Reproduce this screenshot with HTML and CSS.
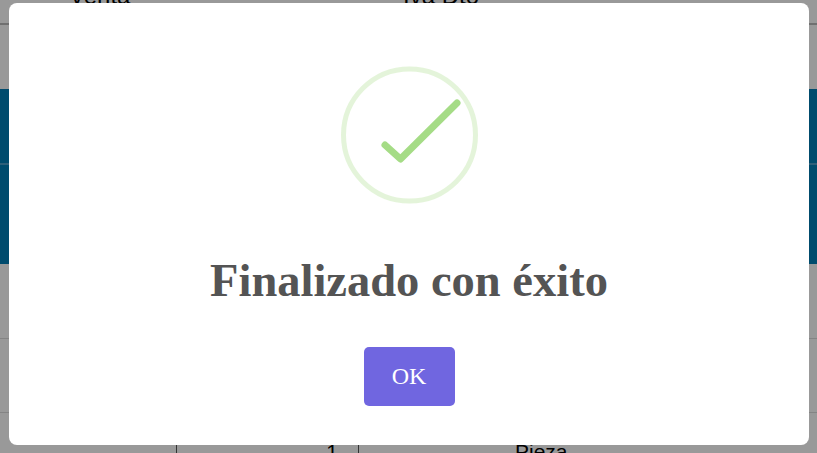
FILE: index.html
```html
<!DOCTYPE html>
<html lang="es">
<head>
<meta charset="UTF-8">
<title>Finalizado con éxito</title>
<link rel="stylesheet" href="styles.css">
</head>
<body>
    <div class="page">
        <div class="row row-top">
            <span class="cell-venta">Venta</span>
            <span class="cell-dot">●</span>
            <span class="cell-iva">Iva Dto</span>
        </div>
        <div class="row row-gap"></div>
        <div class="row row-blue row-blue-a"></div>
        <div class="row row-blue row-blue-b"></div>
        <div class="row row-plain"></div>
        <div class="row row-plain"></div>
        <div class="row row-data">
            <span class="cell-empty"></span>
            <span class="cell-qty">1</span>
            <span class="cell-unit">Pieza</span>
        </div>
    </div>

    <div class="overlay">
        <div class="modal">
            <svg class="success-icon" width="138" height="138" viewBox="0 0 138 138">
                <circle cx="69.500" cy="69" r="66" fill="none" stroke="#a5dc86" stroke-opacity="0.3" stroke-width="5"/>
                <path d="M45 79 L60.500 93 L117 37" fill="none" stroke="#a5dc86" stroke-width="7" stroke-linecap="round" stroke-linejoin="round"/>
            </svg>
            <h2 class="title">Finalizado con éxito</h2>
            <button type="button" class="confirm">OK</button>
        </div>
    </div>
</body>
</html>
```

FILE: styles.css
```css
html, body {
    height: 100%;
    margin: 0;
    overflow: hidden;
}

body {
    background: #fff;
    font-family: "Liberation Sans", Arial, sans-serif;
    font-size: 21px;
    color: #000;
}

.page {
    display: flex;
    flex-flow: column nowrap;
}

.row {
    display: grid;
    grid-template-columns: 177px 182px 1fr;
    box-sizing: border-box;
    border-bottom: 1px solid #ddd;
}

.row-top {
    grid-template-columns: 365px 38px 1fr;
    height: 25px;
    border-bottom: 2px solid #bbb;
    overflow: hidden;
    font-size: 24px;
    line-height: 24px;
}

.row-top span {
    margin-top: -16px;
}

.cell-venta {
    padding-left: 69px;
}

.cell-dot {
    font-size: 14px;
}

.row-gap {
    height: 64px;
    border-bottom: none;
}

.row-blue {
    background: #007eb6;
    border-bottom: none;
}

.row-blue-a {
    height: 76px;
    border-bottom: 2px solid #4d9fca;
}

.row-blue-b {
    height: 99px;
}

.row-plain {
    height: 74.500px;
}

.row-data {
    height: 40px;
    border-bottom: none;
}

.cell-empty {
    border-right: 1px solid #555;
}

.cell-qty {
    padding: 27px 20px 0 0;
    text-align: right;
    border-right: 1px solid #555;
}

.cell-unit {
    padding: 27px 0 0 156px;
}

.overlay {
    position: fixed;
    inset: 0;
    display: flex;
    justify-content: center;
    align-items: flex-start;
    padding: 3px 0 0 1px;
    background: rgba(0, 0, 0, 0.4);
}

.modal {
    display: flex;
    flex-flow: column nowrap;
    align-items: center;
    box-sizing: border-box;
    width: 800px;
    height: 442px;
    padding-top: 63px;
    background: #fff;
    border-radius: 8px;
}

.success-icon {
    display: block;
    flex: none;
}

.title {
    margin: 51px 0 0;
    font-family: "Liberation Serif", "Times New Roman", serif;
    font-size: 46.500px;
    line-height: 52px;
    font-weight: bold;
    color: #545454;
}

.confirm {
    width: 91px;
    height: 59px;
    margin-top: 40px;
    padding: 0;
    border: none;
    border-radius: 5px;
    background: #7066e0;
    color: #fff;
    font-family: "Liberation Serif", "Times New Roman", serif;
    font-size: 24px;
}
```
